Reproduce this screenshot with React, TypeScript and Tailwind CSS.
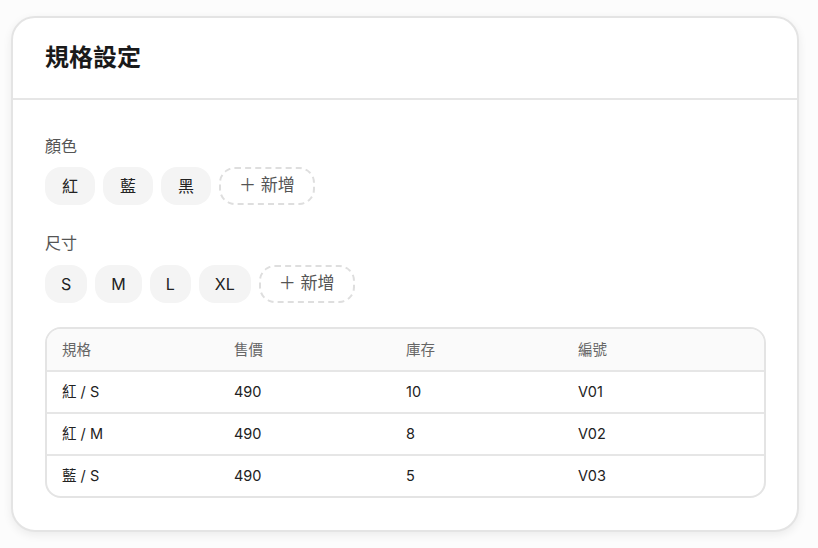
export default function App() {
  const colors = ["紅", "藍", "黑"];
  const sizes = ["S", "M", "L", "XL"];
  const rows = [
    { spec: "紅 / S", price: "490", stock: "10", code: "V01" },
    { spec: "紅 / M", price: "490", stock: "8", code: "V02" },
    { spec: "藍 / S", price: "490", stock: "5", code: "V03" },
  ];

  const font = { fontFamily: "Inter, 'Noto Sans CJK TC', sans-serif" };

  return (
    <div className="min-h-[548px] w-[818px] bg-[#fcfcfc] pt-4 pl-[11px]" style={font}>
      <div className="w-[788px] rounded-[24px] border-2 border-[#e4e4e4] bg-white shadow-[0_3px_10px_rgba(0,0,0,0.07)]">
        {/* HEADER */}
        <div className="border-b-2 border-[#e6e6e6] px-[32px] py-[23px]">
          <h1 className="text-[24px] font-bold leading-[34px] text-[#1a1a1a]">規格設定</h1>
        </div>

        {/* BODY */}
        <div className="px-[32px] pt-[36px] pb-[32px]">
          <div className="text-[16px] leading-[20px] text-[#555]">顏色</div>
          <div className="mt-[11px] flex gap-2">
            {colors.map((c) => (
              <span key={c} className="flex h-[38px] items-center rounded-[16px] bg-[#f4f4f4] px-[17px] text-[16px] text-[#222]">
                {c}
              </span>
            ))}
            <span className="flex h-[38px] items-center rounded-[16px] border-2 border-dashed border-[#dedede] px-[18px] text-[17px] text-[#555]">
              ＋ 新增
            </span>
          </div>

          <div className="mt-[28px] text-[16px] leading-[20px] text-[#555]">尺寸</div>
          <div className="mt-[12px] flex gap-2">
            {sizes.map((s) => (
              <span key={s} className="flex h-[38px] items-center rounded-[16px] bg-[#f4f4f4] px-[16px] text-[16px] text-[#222]">
                {s}
              </span>
            ))}
            <span className="flex h-[38px] items-center rounded-[16px] border-2 border-dashed border-[#dedede] px-[18px] text-[17px] text-[#555]">
              ＋ 新增
            </span>
          </div>

          {/* TABLE */}
          <div className="mt-[24px] w-[721px] overflow-hidden rounded-[16px] border-2 border-[#e4e4e4] text-[14.5px]">
            <div className="grid h-[41px] grid-cols-[172px_172px_172px_1fr] items-center bg-[#fafafa] px-[15px] text-[#666]">
              <span>規格</span>
              <span>售價</span>
              <span>庫存</span>
              <span>編號</span>
            </div>
            {rows.map((r) => (
              <div key={r.code} className="grid h-[42px] grid-cols-[172px_172px_172px_1fr] items-center border-t-2 border-[#e6e6e6] px-[15px] text-[#222]">
                <span>{r.spec}</span>
                <span>{r.price}</span>
                <span>{r.stock}</span>
                <span>{r.code}</span>
              </div>
            ))}
          </div>
        </div>
      </div>
    </div>
  );
}
